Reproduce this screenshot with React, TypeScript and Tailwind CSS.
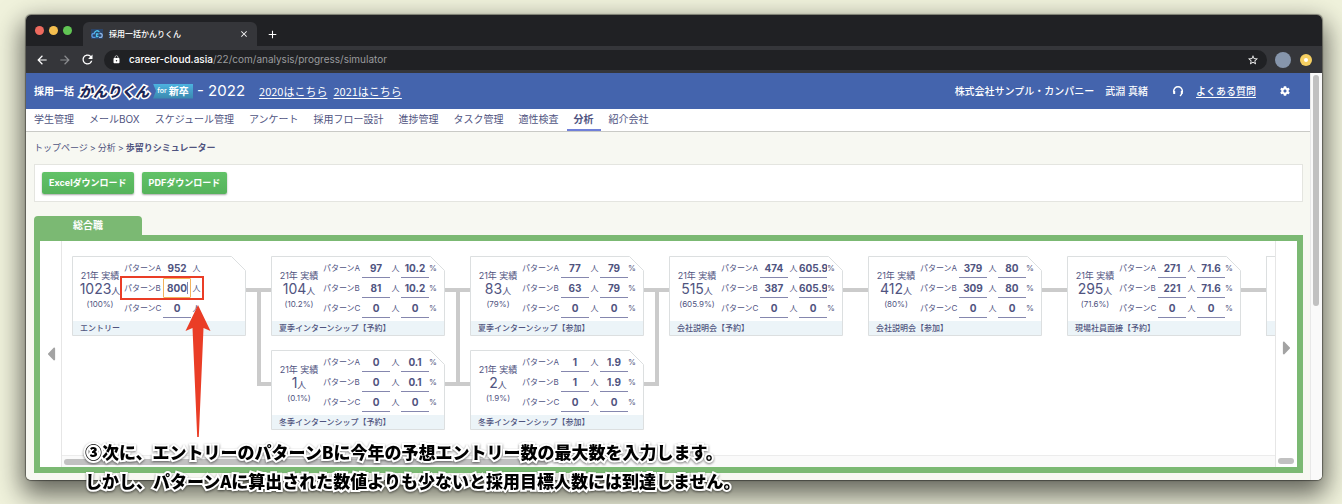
import { Fragment } from "react";
import { FaCog, FaCaretLeft, FaCaretRight } from "react-icons/fa";
import { MdArrowBack, MdArrowForward, MdRefresh, MdLock, MdStarBorder, MdClose, MdAdd } from "react-icons/md";

type Row = { people: string; rate?: string; plain?: boolean; focused?: boolean };
type Step = { id: string; title: string; actual: string; ratio: string; rows: Row[] };
type Link = "split" | "both" | "merge" | "line";

const step = (id: string, title: string, actual: string, ratio: string, a: string[], b: string[]): Step => ({
  id,
  title,
  actual,
  ratio,
  rows: [
    { people: a[0], rate: a[1] },
    { people: b[0], rate: b[1] },
    { people: "0", rate: "0" },
  ],
});

const entry: Step = {
  id: "entry",
  title: "エントリー",
  actual: "1023",
  ratio: "100%",
  rows: [{ people: "952", plain: true }, { people: "800", focused: true }, { people: "0" }],
};

const columns: { steps: Step[]; link: Link }[] = [
  { steps: [entry], link: "split" },
  {
    steps: [
      step("summer-reserve", "夏季インターンシップ【予約】", "104", "10.2%", ["97", "10.2"], ["81", "10.2"]),
      step("winter-reserve", "冬季インターンシップ【予約】", "1", "0.1%", ["0", "0.1"], ["0", "0.1"]),
    ],
    link: "both",
  },
  {
    steps: [
      step("summer-join", "夏季インターンシップ【参加】", "83", "79%", ["77", "79"], ["63", "79"]),
      step("winter-join", "冬季インターンシップ【参加】", "2", "1.9%", ["1", "1.9"], ["1", "1.9"]),
    ],
    link: "merge",
  },
  { steps: [step("briefing-reserve", "会社説明会【予約】", "515", "605.9%", ["474", "605.9"], ["387", "605.9"])], link: "line" },
  { steps: [step("briefing-join", "会社説明会【参加】", "412", "80%", ["379", "80"], ["309", "80"])], link: "line" },
  { steps: [step("interview-reserve", "現場社員面接【予約】", "295", "71.6%", ["271", "71.6"], ["221", "71.6"])], link: "line" },
];

const linkPaths: Record<Link, string> = {
  line: "M0 34H25",
  split: "M0 34H25M13 34V128H25",
  both: "M0 34H25M13 34V128M0 128H25",
  merge: "M0 34H25M13 34V128H0",
};

const navItems = ["学生管理", "メールBOX", "スケジュール管理", "アンケート", "採用フロー設計", "進捗管理", "タスク管理", "適性検査", "分析", "紹介会社"];

function Connector({ type }: { type: Link }) {
  return (
    <svg className="shrink-0" width="25" height="174" viewBox="0 0 25 174" fill="none" stroke="#cbcbcb" strokeWidth="4">
      <path d={linkPaths[type]} />
    </svg>
  );
}

function PatternRow({ stepId, name, row }: { stepId: string; name: string; row: Row }) {
  const id = `${stepId}-${name}`;
  let box = "border-b border-[#8587ae]";
  if (row.plain) box = "border-b border-transparent";
  if (row.focused) box = "border border-[#f3b35c] rounded-[1px]";

  return (
    <div className="relative flex h-5 items-center text-[8px]">
      <label htmlFor={id} className="w-[39px] shrink-0 whitespace-nowrap">
        パターン{name}
      </label>
      <input
        id={id}
        defaultValue={row.people}
        className={`h-full w-7 bg-transparent text-center text-[10px] font-bold outline-none ${box}`}
      />
      <span className="w-[11px] text-center">人</span>
      {row.rate && (
        <>
          <input
            aria-label={`パターン${name} 歩留り率`}
            defaultValue={row.rate}
            className="h-full w-7 border-b border-[#8587ae] bg-transparent text-center text-[10px] font-bold outline-none"
          />
          <span className="w-2 text-center">%</span>
        </>
      )}
      {row.focused && (
        <>
          <span className="absolute top-1 left-[63px] h-3 w-px bg-[#8587ae]" />
          <span className="absolute -top-[2px] -left-1 h-6 w-[84px] border-2 border-[#ea3d26]" />
          <svg className="absolute top-[27px] left-[61px] z-10" width="26" height="132" viewBox="0 0 26 132">
            <path d="M13 0L25.500 26L18.500 23L13.800 132H12.200L7.500 23L0.500 26Z" fill="#ea3d26" />
          </svg>
        </>
      )}
    </div>
  );
}

function StepCard({ data }: { data: Step }) {
  return (
    <div className="relative h-20 w-[174px]">
      <svg className="absolute inset-0" width="174" height="80" viewBox="0 0 174 80">
        <path d="M0.500 0.500H159.500L173.500 14.500V79.500H0.500Z" fill="#fff" stroke="#dcdfe0" />
        <path d="M1 65H173V79H1Z" fill="#ecf4f8" />
      </svg>
      <div className="relative flex h-[65px] pt-[2px] pl-1">
        <div className="flex w-12 flex-col items-center pt-3 whitespace-nowrap">
          <span className="text-[9px] leading-3">21年 実績</span>
          <span className="text-[14px] leading-[14px]">
            {data.actual}
            <span className="text-[9px]">人</span>
          </span>
          <span className="text-[8px] leading-3">({data.ratio})</span>
        </div>
        <div>
          {data.rows.map((row, i) => (
            <PatternRow key={i} stepId={data.id} name={"ABC"[i]} row={row} />
          ))}
        </div>
      </div>
      <h3 className="relative pl-2 text-[8px] leading-[14px] font-medium">{data.title}</h3>
    </div>
  );
}

function BrowserBar() {
  return (
    <div className="bg-[#202124] text-white">
      <div className="flex h-[31px] items-end">
        <div className="mb-[11px] flex w-[57px] gap-[5px] pl-[9px]">
          <span className="size-[9px] rounded-full bg-[#ed6a5e]" />
          <span className="size-[9px] rounded-full bg-[#f5bf4f]" />
          <span className="size-[9px] rounded-full bg-[#61c554]" />
        </div>
        <div className="flex h-6 w-[174px] items-center rounded-t-md bg-[#35363a] pr-2 pl-2">
          <svg width="12" height="10" viewBox="0 0 12 10" fill="none" strokeWidth="1.300">
            <rect width="12" height="10" fill="#2b4468" />
            <path d="M4.500 8.300H2.800A1.900 1.900 0 0 1 2.800 4.500H4" stroke="#5b9be0" />
            <path d="M8 8.300H9.300A1.900 1.900 0 0 0 9.300 4.500H8.500" stroke="#8fb6e6" />
            <path d="M3.500 4A2.600 2.600 0 0 1 8.300 3M7.500 5H5.500V7.500H7.500" stroke="#4cc4f2" />
          </svg>
          <span className="ml-[6px] flex-1 text-[8px] font-medium">採用一括かんりくん</span>
          <MdClose className="size-[10px]" />
        </div>
        <MdAdd className="mb-[5px] ml-[9px] size-[13px]" />
      </div>
      <div className="flex h-[27px] items-center bg-[#35363a] pr-[10px] pl-[9px]">
        <MdArrowBack className="size-[14px]" />
        <MdArrowForward className="ml-[9px] size-[14px] text-[#8c8d90]" />
        <MdRefresh className="ml-2 size-[15px]" />
        <div className="mr-2 ml-[9px] flex h-5 flex-1 items-center rounded-full bg-[#202124] px-2">
          <MdLock className="size-[9px]" />
          <span className="ml-2 flex-1 text-[10px] text-[#9a9b9e]">
            <span className="font-medium text-white">career-cloud.asia</span>/22/com/analysis/progress/simulator
          </span>
          <MdStarBorder className="size-3" />
        </div>
        <span className="size-4 rounded-full bg-[#8695ab]" />
        <span className="ml-[9px] flex size-3 items-center justify-center rounded-full bg-[#f5cf62]">
          <span className="size-1 rounded-full bg-white" />
        </span>
      </div>
    </div>
  );
}

function SiteHeader() {
  return (
    <header className="flex h-9 items-center bg-[#4464ad] px-2 text-[10px] whitespace-nowrap text-white">
      <span className="font-bold">採用一括</span>
      <span className="ml-[5px] text-[14px] font-black text-[#1c2757] italic [-webkit-text-stroke:3px_#fff] [paint-order:stroke_fill]">
        かんりくん
      </span>
      <span className="ml-1 flex h-[15px] w-10 items-center justify-center gap-[2px] bg-linear-to-b from-[#4db3e0] to-[#3a88ae] text-[10px] font-bold [clip-path:polygon(0_0,100%_0,100%_100%,0_100%,3px_50%)]">
        <span className="text-[7px] font-medium">for</span>新卒
      </span>
      <span className="ml-1 text-[15px]">- 2022</span>
      <nav className="ml-[14px] flex gap-[6px] font-['Noto_Sans_CJK_JP',sans-serif] text-[11px]">
        <a href="#2020" className="underline underline-offset-2">2020はこちら</a>
        <a href="#2021" className="underline underline-offset-2">2021はこちら</a>
      </nav>
      <div className="ml-auto flex items-center font-medium">
        <span>株式会社サンプル・カンパニー</span>
        <span className="ml-[11px]">武淵 真緒</span>
        <svg className="ml-6 size-3" viewBox="0 0 12 12" fill="none" stroke="currentColor">
          <path d="M1.700 7.500V6A4.300 4.300 0 0 1 10.300 6V7.500" strokeWidth="1.500" />
          <path d="M2.200 6V9M9.800 6V9" strokeWidth="2" />
          <path d="M9.800 9L8 11" strokeWidth="1.200" />
        </svg>
        <a href="#faq" className="ml-3 underline underline-offset-2">よくある質問</a>
        <button aria-label="設定" className="mr-3 ml-6">
          <FaCog className="size-[10px]" />
        </button>
      </div>
    </header>
  );
}

function Board() {
  return (
    <section className="mt-[14px]">
      <h2 className="flex h-[19px] w-[108px] items-center justify-center rounded-t bg-[#7bb973] text-[10px] font-bold text-white">総合職</h2>
      <div className="flex border-[6px] border-[#7bb973] bg-white">
        <button aria-label="前へ" className="flex w-[21px] shrink-0 items-center justify-center text-[#a3a3a3]">
          <FaCaretLeft className="h-[22px] w-4" />
        </button>
        <div className="min-w-0 flex-1 border-x border-[#e6e6e6]">
          <div className="flex overflow-hidden pt-[15px] pb-[25px] pl-[10px]">
            {columns.map((col, i) => (
              <Fragment key={i}>
                <div className="flex shrink-0 flex-col gap-[14px]">
                  {col.steps.map((s) => (
                    <StepCard key={s.id} data={s} />
                  ))}
                </div>
                <Connector type={col.link} />
              </Fragment>
            ))}
            <div className="h-20 w-[174px] shrink-0 border border-[#dcdfe0] pt-16">
              <div className="h-[14px] bg-[#ecf4f8]" />
            </div>
          </div>
          <div className="flex h-3 items-center border-t border-[#ececec] bg-[#fafafa] px-[2px]">
            <div className="h-[6px] w-2/5 rounded-full bg-[#c1c1c1]" />
          </div>
        </div>
        <div className="flex w-[21px] shrink-0 flex-col">
          <button aria-label="次へ" className="flex flex-1 items-center justify-center text-[#a3a3a3]">
            <FaCaretRight className="h-[22px] w-4" />
          </button>
          <div className="flex h-3 items-center pl-[2px]">
            <div className="h-[6px] w-4 rounded-full bg-[#c1c1c1]" />
          </div>
        </div>
      </div>
    </section>
  );
}

export default function App() {
  const button =
    "h-[22px] rounded-[2px] bg-linear-to-b from-[#62c268] to-[#55b35b] px-[7px] text-[9px] font-bold whitespace-nowrap text-white shadow-[0_1px_2px_rgba(0,0,0,0.35)]";

  return (
    <div className="min-h-screen overflow-hidden bg-[#f0f2dc] pt-[15px] pr-5 pb-6 pl-[26px] font-['Inter','Noto_Sans_CJK_JP',sans-serif] text-[#50547f]" lang="ja">
      <div className="relative rounded-[5px] shadow-[0_0_1px_1px_rgba(0,0,0,0.4),0_11px_26px_4px_rgba(0,0,0,0.58)]">
        <div className="overflow-hidden rounded-[5px]">
          <BrowserBar />
          <div className="flex bg-[#f7f8f2]">
            <div className="min-w-0 flex-1">
              <SiteHeader />
              <nav className="flex h-[23px] gap-px border-b border-[#c9cac6] bg-white pl-px text-[10px] whitespace-nowrap">
                {navItems.map((item) => (
                  <a
                    key={item}
                    href="#"
                    className={`flex items-center border-b-2 px-[7px] ${
                      item === "分析" ? "border-[#7080d8] font-bold" : "border-transparent"
                    }`}
                  >
                    {item}
                  </a>
                ))}
              </nav>
              <main className="pr-[7px] pb-[7px] pl-2">
                <div className="flex h-8 items-center gap-[2px] text-[9px] whitespace-nowrap">
                  <a href="#top">トップページ</a>
                  <span>&gt;</span>
                  <a href="#analysis">分析</a>
                  <span>&gt;</span>
                  <span className="font-bold">歩留りシミュレーター</span>
                </div>
                <div className="flex h-[38px] items-center gap-2 border border-[#e4e5e0] bg-white px-[7px]">
                  <button className={button}>Excelダウンロード</button>
                  <button className={button}>PDFダウンロード</button>
                </div>
                <Board />
              </main>
            </div>
            <div className="w-3 shrink-0 border-l border-[#e8e8e8] bg-[#fafafa] px-[2px] pt-[2px]">
              <div className="h-[231px] w-[6px] rounded-full bg-[#c1c1c1]" />
            </div>
          </div>
        </div>
        <p className="absolute -bottom-[15px] left-[59px] z-20 font-['Noto_Sans_CJK_JP',sans-serif] text-[17px] leading-[29px] font-black whitespace-nowrap text-black [-webkit-text-stroke:4px_#fff] [paint-order:stroke_fill] [filter:drop-shadow(0_1px_1px_rgba(0,0,0,0.5))]">
          ③次に、エントリーのパターンBに今年の予想エントリー数の最大数を入力します。
          <br />
          しかし、パターンAに算出された数値よりも少ないと採用目標人数には到達しません。
        </p>
      </div>
    </div>
  );
}
